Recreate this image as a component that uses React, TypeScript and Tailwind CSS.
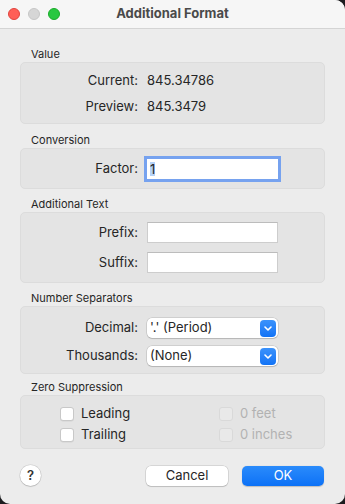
import type { ReactNode } from "react";

function Section({
  label,
  top,
  children,
  box,
}: {
  label: string;
  top: string;
  children: ReactNode;
  box: string;
}) {
  return (
    <div className={top}>
      <div className="h-[15px] pl-[11px] text-[11px] leading-[15px] text-[#262626]">{label}</div>
      <div className={`rounded-[5px] border border-[#dcdcdc] bg-[#e4e4e4] ${box}`}>{children}</div>
    </div>
  );
}

function Row({ label, children }: { label: string; children: ReactNode }) {
  return (
    <div className="flex h-[20px] items-center">
      <div className="w-[117px] text-right">{label}</div>
      {children}
    </div>
  );
}

function Field({ children }: { children?: ReactNode }) {
  return (
    <div className="ml-[9px] flex h-[21px] w-[131px] items-center border border-[#cdcdcd] border-t-[#bcbcbc] bg-white pl-[3px]">
      {children}
    </div>
  );
}

function Popup({ value }: { value: string }) {
  return (
    <div className="ml-[9px] flex h-[20px] w-[131px] items-center justify-between rounded-[5px] bg-white pl-[3px] pr-[2px] shadow-[0_0_0_0.5px_rgba(0,0,0,0.18),0_1px_1px_rgba(0,0,0,0.12)]">
      <span>{value}</span>
      <span className="flex h-[17px] w-[16px] items-center justify-center rounded-[4px] bg-gradient-to-b from-[#3b92fb] to-[#1173f6]">
        <svg width="8" height="5" viewBox="0 0 8 5">
          <path d="M1 1 L4 4 L7 1" fill="none" stroke="white" strokeWidth="1.6" strokeLinecap="round" strokeLinejoin="round" />
        </svg>
      </span>
    </div>
  );
}

function Check({ label, disabled }: { label: string; disabled?: boolean }) {
  return (
    <div className="flex h-[16px] items-center gap-[7px]">
      <span
        className={`h-[14px] w-[14px] rounded-[3px] border ${
          disabled ? "border-[#d9d9d9] bg-[#e9e9e9]" : "border-[#c8c8c8] bg-white shadow-[0_0.5px_0.5px_rgba(0,0,0,0.08)]"
        }`}
      />
      <span className={disabled ? "text-[#b2b2b2]" : ""}>{label}</span>
    </div>
  );
}

export default function App() {
  return (
    <div className="h-[504px] w-[345px] bg-[#1c1c1f] font-['Inter','Noto_Sans',sans-serif] text-[13px] text-[#262626]">
      <div className="flex h-full flex-col overflow-hidden rounded-tr-[10px] rounded-b-[10px] bg-[#ececec]">
        {/* Title bar */}
        <div className="relative flex h-[29px] items-center justify-center border-b border-[#d4d4d4] bg-[#f6f6f6]">
          <div className="absolute left-[8px] top-[8px] flex gap-[8px]">
            <span className="h-[12px] w-[12px] rounded-full border border-[#e0443e] bg-[#ff5f57]" />
            <span className="h-[12px] w-[12px] rounded-full border border-[#c6c6c6] bg-[#d6d6d6]" />
            <span className="h-[12px] w-[12px] rounded-full border border-[#1aab29] bg-[#28c840]" />
          </div>
          <span className="text-[13px] font-bold text-[#4a4a4a]">Additional Format</span>
        </div>

        <div className="px-[20px]">
          <Section label="Value" top="mt-[18px]" box="h-[62px] pt-[8px] flex flex-col gap-[6px]">
            <Row label="Current:">
              <span className="ml-[9px]">845.34786</span>
            </Row>
            <Row label="Preview:">
              <span className="ml-[9px]">845.3479</span>
            </Row>
          </Section>

          <Section label="Conversion" top="mt-[9px]" box="h-[41px] pt-[10px]">
            <div className="flex h-[19px] items-center">
              <div className="w-[117px] text-right">Factor:</div>
              <div className="ml-[9px] flex h-[20px] w-[131px] items-center bg-white pl-[3px] shadow-[0_0_0_3px_#76a2ef]">
                <span className="bg-[#b4d2f8] leading-[14px]">1</span>
              </div>
            </div>
          </Section>

          <Section label="Additional Text" top="mt-[8px]" box="h-[71px] pt-[9px] flex flex-col gap-[9px]">
            <div className="flex h-[21px] items-center">
              <div className="w-[117px] text-right">Prefix:</div>
              <Field />
            </div>
            <div className="flex h-[21px] items-center">
              <div className="w-[117px] text-right">Suffix:</div>
              <Field />
            </div>
          </Section>

          <Section label="Number Separators" top="mt-[8px]" box="h-[68px] pt-[11px] flex flex-col gap-[8px]">
            <Row label="Decimal:">
              <Popup value="'.' (Period)" />
            </Row>
            <Row label="Thousands:">
              <Popup value="(None)" />
            </Row>
          </Section>

          <Section label="Zero Suppression" top="mt-[6px]" box="h-[54px] pt-[10px] pl-[39px] grid grid-cols-[159px_1fr] gap-y-[5px] content-start">
            <Check label="Leading" />
            <Check label="0 feet" disabled />
            <Check label="Trailing" />
            <Check label="0 inches" disabled />
          </Section>

          <div className="mt-[16px] flex items-center gap-[14px] pr-[1px]">
            <div className="flex h-[21px] w-[21px] items-center justify-center rounded-full bg-white text-[13px] font-semibold text-[#333] shadow-[0_0_0_0.5px_rgba(0,0,0,0.15),0_1px_1px_rgba(0,0,0,0.12)]">
              ?
            </div>
            <div className="ml-auto flex h-[20px] w-[82px] items-center justify-center rounded-[5px] bg-white shadow-[0_0_0_0.5px_rgba(0,0,0,0.18),0_1px_1px_rgba(0,0,0,0.12)]">
              Cancel
            </div>
            <div className="flex h-[20px] w-[82px] items-center justify-center rounded-[5px] bg-gradient-to-b from-[#2a8bfb] to-[#0b71f6] text-white shadow-[0_0.5px_1px_rgba(0,0,0,0.2)]">
              OK
            </div>
          </div>
        </div>
      </div>
    </div>
  );
}
